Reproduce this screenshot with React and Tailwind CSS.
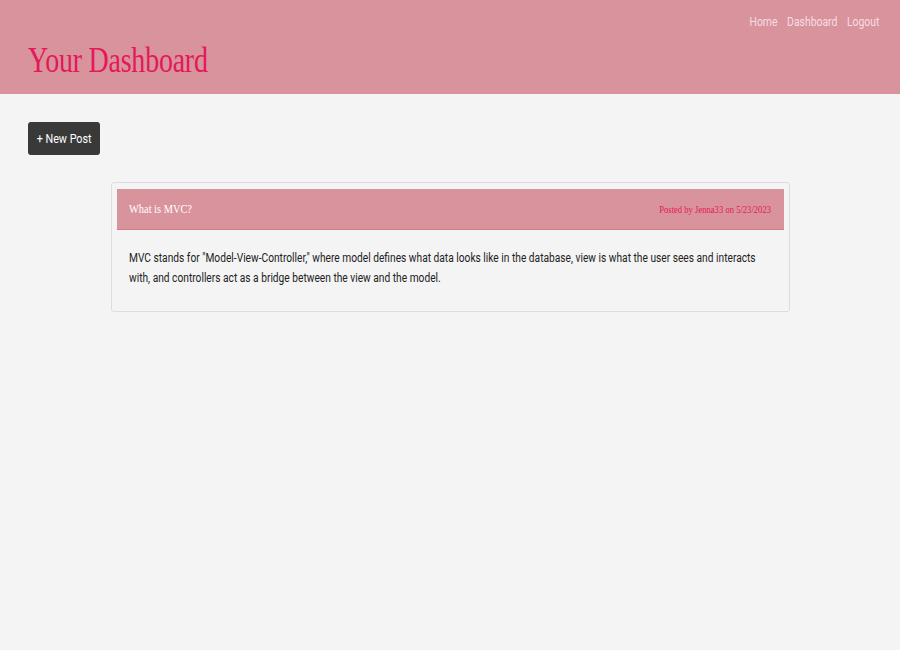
import React from "react";

const posts = [
  {
    id: 1,
    title: "What is MVC?",
    author: "Jenna33",
    date: "5/23/2023",
    body:
      'MVC stands for "Model-View-Controller," where model defines what data looks like in the database, view is what the user sees and interacts with, and controllers act as a bridge between the view and the model.',
  },
];

const serif = "font-['Liberation_Serif',serif]";

const App = () => {
  return (
    <div className="min-h-screen bg-[#f4f4f4] font-['Roboto',sans-serif] overflow-x-hidden">
      {/* Header */}
      <header className="h-[94px] bg-[#d9939d] flex justify-between px-[28px]">
        <h1
          className={`${serif} text-[#e3195a] text-[35px] leading-none pt-[43px] tracking-[-0.3px] scale-x-[0.8] origin-left`}
        >
          Your Dashboard
        </h1>
        <nav className="flex gap-[12px] pt-[15px] text-[13px] text-[#f6dde1] leading-none h-fit -mr-[7px] scale-x-[0.8] origin-right">
          <a href="#">Home</a>
          <a href="#">Dashboard</a>
          <a href="#">Logout</a>
        </nav>
      </header>

      <main className="px-[28px] pt-[28px]">
        <button className="w-[72px] h-[33px] bg-[#393939] text-white text-[13px] rounded-[3px] flex items-center justify-center">
          <span className="inline-block whitespace-nowrap scale-x-[0.83]">+ New Post</span>
        </button>

        <div className="flex flex-col items-center mt-[27px] -mx-[28px]">
          {posts.map((post) => (
            <div
              key={post.id}
              className="w-[679px] border border-[#dddddd] rounded-[3px] bg-[#f4f4f4] px-[5px] pt-[6px] pb-[23px]"
            >
              <div className="h-[41px] bg-[#d9939d] border-b border-[#c97e89] flex items-center justify-between px-[12px]">
                <span className={`${serif} inline-block text-white text-[13px] scale-x-[0.8] origin-left`}>
                  {post.title}
                </span>
                <span className={`${serif} inline-block text-[#e3195a] text-[10px] scale-x-[0.86] origin-right`}>
                  Posted by {post.author} on {post.date}
                </span>
              </div>
              <div className="px-[12px] pt-[18px] overflow-hidden">
                <p className="w-[756px] text-[12px] leading-[20px] text-[#222222] scale-x-[0.85] origin-left">
                  {post.body}
                </p>
              </div>
            </div>
          ))}
        </div>
      </main>
    </div>
  );
};

export default App;
